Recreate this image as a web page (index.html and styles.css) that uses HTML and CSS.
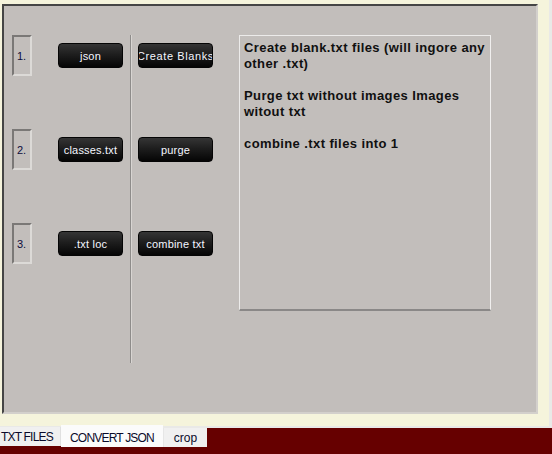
FILE: index.html
```html
<!DOCTYPE html>
<html>
<head>
<meta charset="utf-8">
<link rel="stylesheet" href="styles.css">
</head>
<body>
<div class="frame">
  <div class="panel">
    <div class="leftcol">
      <div class="row"><div class="num">1.</div><div class="btn btn-a">json</div></div>
      <div class="row"><div class="num">2.</div><div class="btn btn-a">classes.txt</div></div>
      <div class="row"><div class="num">3.</div><div class="btn btn-a">.txt loc</div></div>
    </div>
    <div class="sep"></div>
    <div class="midcol">
      <div class="btn btn-b"><span class="wide">Create Blanks</span></div>
      <div class="btn btn-b"><span>purge</span></div>
      <div class="btn btn-b"><span>combine txt</span></div>
    </div>
    <div class="textbox">
      <p>Create blank.txt files (will ingore any other .txt)</p>
      <p>Purge txt without images Images witout txt</p>
      <p>combine .txt files into 1</p>
    </div>
  </div>
</div>
<div class="tabbar">
  <div class="tab tab-first">TXT FILES</div>
  <div class="tab tab-active">CONVERT JSON</div>
  <div class="tab tab-last">crop</div>
</div>
</body>
</html>
```

FILE: styles.css
```css
html, body {
  margin: 0;
  padding: 0;
}
body {
  width: 552px;
  height: 454px;
  overflow: hidden;
  background: #660000;
  font-family: "Liberation Sans", Arial, sans-serif;
}
.frame {
  box-sizing: border-box;
  height: 428px;
  background: #f5f4dc;
  border-right: 3px solid #e9e9e7;
  border-bottom: 2px solid #e9e9e7;
  padding: 4px 0 0 2px;
}
.panel {
  box-sizing: border-box;
  width: 536px;
  height: 410px;
  background: #c2bebb;
  border-top: 2px solid #454545;
  border-left: 2px solid #454545;
  border-right: 2px solid #d3d0cc;
  border-bottom: 2px solid #d3d0cc;
  display: flex;
  align-items: flex-start;
  padding: 29px 0 0 8px;
}
.leftcol {
  display: flex;
  flex-direction: column;
  gap: 53px;
}
.row {
  display: flex;
  align-items: center;
  gap: 26px;
}
.num {
  box-sizing: border-box;
  width: 20px;
  height: 41px;
  border-top: 2px solid #7a7876;
  border-left: 2px solid #7a7876;
  border-right: 2px solid #dcdad7;
  border-bottom: 2px solid #dcdad7;
  font-size: 11px;
  color: #0c0c3c;
  display: flex;
  align-items: center;
  padding-left: 3px;
}
.btn {
  box-sizing: border-box;
  height: 25px;
  border: 1px solid #050505;
  border-radius: 4px;
  background: linear-gradient(#353535 0%, #1e1e1e 45%, #050505 100%);
  color: #f4f6ff;
  font-size: 11px;
  letter-spacing: 0.2px;
  display: flex;
  align-items: center;
  justify-content: center;
  overflow: hidden;
  white-space: nowrap;
}
.btn-a {
  width: 65px;
}
.btn-b {
  width: 75px;
}
.btn-b span {
  flex: none;
}
.btn-b .wide {
  letter-spacing: 0.6px;
}
.sep {
  width: 1px;
  height: 328px;
  margin-left: 7px;
  background: #8e8c8a;
  border-right: 1px solid #d8d5d2;
}
.midcol {
  display: flex;
  flex-direction: column;
  gap: 69px;
  padding-top: 8px;
  margin-left: 6px;
}
.textbox {
  box-sizing: border-box;
  width: 252px;
  height: 276px;
  margin-left: 26px;
  border-top: 1px solid #ecebea;
  border-left: 1px solid #ecebea;
  border-right: 1px solid #f0efee;
  border-bottom: 2px solid #8a8887;
  padding: 4px 4px 0 4px;
  font-weight: bold;
  font-size: 13px;
  letter-spacing: 0.4px;
  line-height: 16px;
  color: #101010;
}
.textbox p {
  margin: 0 0 16px 0;
}
.tabbar {
  display: flex;
  align-items: flex-start;
  height: 26px;
}
.tab {
  box-sizing: border-box;
  font-size: 12px;
  letter-spacing: -0.8px;
  color: #0a0a2a;
  display: flex;
  align-items: center;
  height: 19px;
  background: #f0f0f0;
  white-space: nowrap;
}
.tab-first {
  width: 61px;
  padding-left: 1px;
  margin-top: -1px;
  border-right: 1px solid #e0e0e0;
}
.tab-active {
  width: 102px;
  height: 22px;
  margin-top: -3px;
  background: #fbfbfb;
  justify-content: center;
  padding-top: 3px;
}
.tab-last {
  width: 44px;
  justify-content: center;
  border-left: 1px solid #e6e6e6;
  letter-spacing: 0;
}
```
